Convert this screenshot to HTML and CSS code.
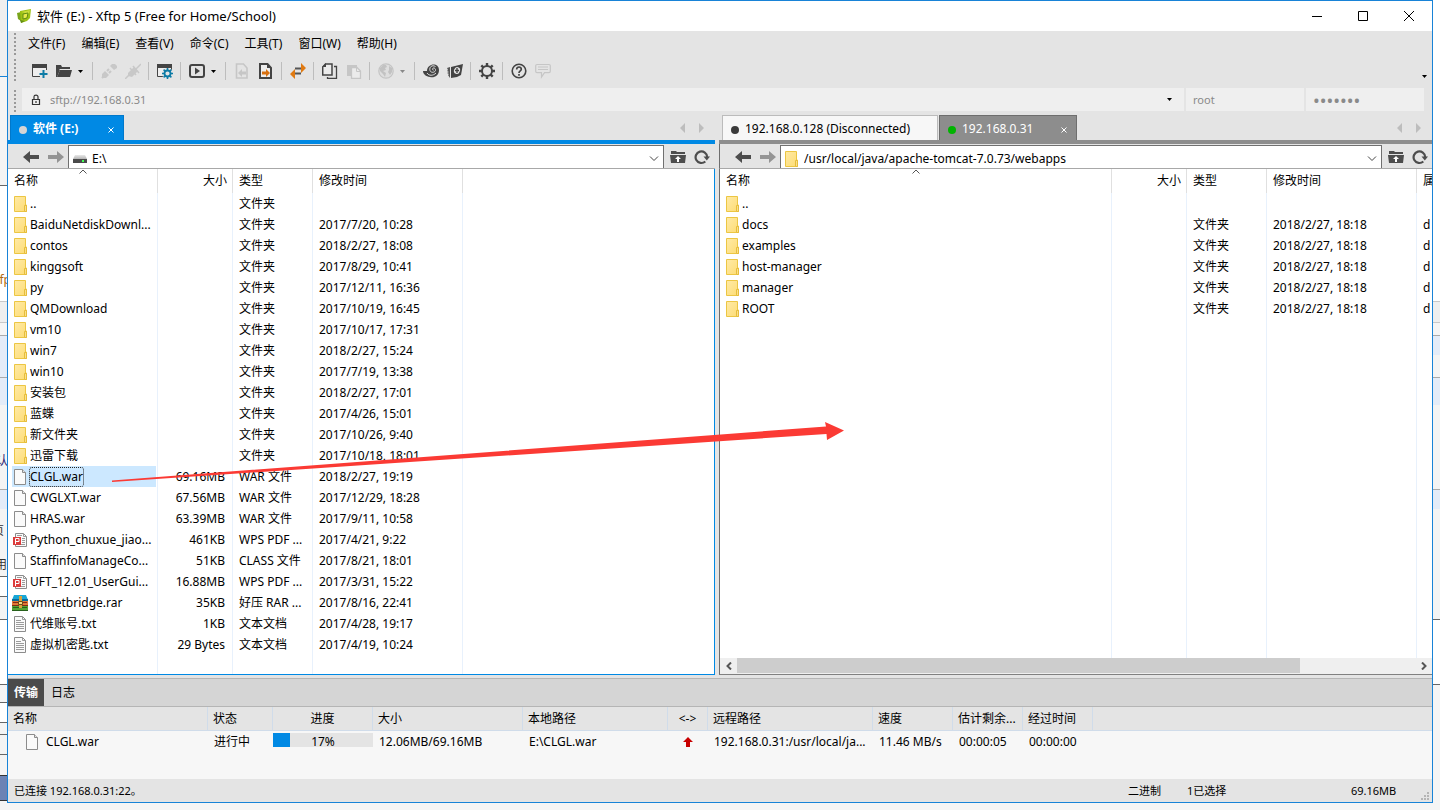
FILE: index.html
```html
<!DOCTYPE html>
<html lang="zh-CN">
<head>
<meta charset="utf-8">
<title>软件 (E:) - Xftp 5 (Free for Home/School)</title>
<link rel="stylesheet" href="styles.css">
</head>
<body>
<svg class="sprite" aria-hidden="true">
  <defs>
    <linearGradient id="fold" x1="0" y1="0" x2="1" y2="1"><stop offset="0" stop-color="#ffeaa6"/><stop offset="1" stop-color="#fddc74"/></linearGradient>
    <linearGradient id="drv" x1="0" y1="0" x2="0" y2="1"><stop offset="0" stop-color="#e8e8e8"/><stop offset="1" stop-color="#b4b4b4"/></linearGradient>
  </defs>
  <symbol id="folder" viewBox="0 0 16 16"><path d="M.5.5h11v8.500h1v6.500h-12z" fill="url(#fold)" stroke="#ecc643"/><path d="M10.500 9.500h2v6h-2z" fill="#fbe08a" stroke="#e6bd3c"/></symbol>
  <symbol id="file" viewBox="0 0 16 16"><path d="M.5.5h8l3 3v12H.5z" fill="#fafafa" stroke="#8c8c8c"/><path d="M8.500.5v3h3" fill="#e4e4e4" stroke="#8c8c8c"/></symbol>
  <symbol id="txt" viewBox="0 0 16 16"><path d="M.5.5h8l3 3v12H.5z" fill="#fafafa" stroke="#8c8c8c"/><path d="M8.500.5v3h3M2 4.500h5M2 6.500h8M2 8.500h8M2 10.500h8M2 12.500h8" fill="none" stroke="#9b9b9b"/></symbol>
  <symbol id="pdf" viewBox="0 0 16 16"><path d="M3.500 1.500h8l3 3v10h-11z" fill="#fafafa" stroke="#8c8c8c"/><path d="M11.500 1.500v3h3M5 3.500h5M10 6.500h3M10 8.500h3M10 10.500h3M5 12.500h8" fill="none" stroke="#9b9b9b"/><rect x="1" y="5" width="8" height="8" fill="#dc3c3c"/><path d="M3.500 12V6.500H7v3H3.500" fill="none" stroke="#fff"/></symbol>
  <symbol id="rar" viewBox="0 0 16 16"><path d="M2 0h12l2 5v1H0V5z" fill="#17a6d6"/><path d="M0 4h16v2H0z" fill="#0b6d9d"/><path d="M0 6h16v4H0z" fill="#e07936"/><path d="M1 7.500h14" stroke="#862a15"/><path d="M0 10h16v1H0z" fill="#862a15"/><path d="M0 11h16v4H0z" fill="#55a433"/><path d="M1 12.500h14M0 15.500h16" stroke="#27611c"/><path d="M7 1h3v12H7z" fill="#d8a33c"/><path d="M6.500 6.500h4v3h-4z" fill="#f6dc83" stroke="#6d4c17"/></symbol>
  <symbol id="drive" viewBox="0 0 14 10"><path d="M2 1h10l2 4H0z" fill="url(#drv)"/><path d="M0 5h14v4H0z" fill="#4a4a4a"/><path d="M9 6h2v2H9z" fill="#4f5"/></symbol>
  <symbol id="back" viewBox="0 0 16 14"><path d="M0 7l7-6v4h9v4H7v4z" fill="currentColor"/></symbol>
  <symbol id="forward" viewBox="0 0 16 14"><path d="M16 7L9 1v4H0v4h9v4z" fill="currentColor"/></symbol>
  <symbol id="up" viewBox="0 0 16 14"><path d="M1 1h5l1 1h8v2H1z" fill="#4d4d4d"/><path d="M0 5h16l-1 8H1z" fill="#4d4d4d"/><path d="M8 6l3 3H9v3H7V9H5z" fill="#fff"/></symbol>
  <symbol id="reload" viewBox="0 0 16 16"><path d="M13.200 8a5.800 5.800 0 1 0-1.900 4.500" fill="none" stroke="#4d4d4d" stroke-width="2.200"/><path d="M9.500 7.500H16l-3.200 4z" fill="#4d4d4d"/></symbol>
  <symbol id="chev" viewBox="0 0 10 6"><path d="M1 .5l4 4 4-4" fill="none" stroke="#444"/></symbol>
  <symbol id="sort" viewBox="0 0 8 5"><path d="M.5 4.500L4 1l3.500 3.500" fill="none" stroke="#555"/></symbol>
  <symbol id="caret" viewBox="0 0 5 3"><path d="M0 0h5L2.500 3z" fill="currentColor"/></symbol>
  <symbol id="tabnav" viewBox="0 0 24 10"><path d="M5 0v10L0 5zM19 0v10l5-5z" fill="#bdbdbd"/></symbol>
  <symbol id="cross" viewBox="0 0 6 6"><path d="M.5.5l5 5m0-5l-5 5" stroke="currentColor"/></symbol>
</svg>

<div class="desktop">
  <div class="strip strip-left"><span class="frag frag-a">tfp</span><span class="frag frag-b">认</span><span class="frag frag-c">页</span><span class="frag frag-d">用</span></div>

  <main class="window">
    <header class="titlebar">
      <svg class="logo" viewBox="0 0 16 16"><path d="M1 5l4-1v9l-3-2z" fill="#79a51b"/><path d="M4 3l11-2-1 9-3 3-6 2z" fill="#9cc114"/><path d="M5 4l9-2-1 4z" fill="#c9dc3c"/><path d="M7 6l5-1-1 5-4 1z" fill="#e9ea4c" stroke="#5f8d14"/><path d="M4 12l5 1-4 2z" fill="#628d17"/></svg>
      <h1>软件 (E:) - Xftp 5 (Free for Home/School)</h1>
      <div class="winbtns">
        <button aria-label="最小化"><svg viewBox="0 0 10 10"><path d="M0 5.500h10" stroke="#000"/></svg></button>
        <button aria-label="最大化"><svg viewBox="0 0 10 10"><path d="M.5.5h9v9h-9z" fill="none" stroke="#000"/></svg></button>
        <button aria-label="关闭"><svg viewBox="0 0 10 10"><path d="M0 0l10 10M10 0L0 10" stroke="#000"/></svg></button>
      </div>
    </header>

    <nav class="menubar">
      <button>文件(F)</button><button>编辑(E)</button><button>查看(V)</button><button>命令(C)</button><button>工具(T)</button><button>窗口(W)</button><button>帮助(H)</button>
    </nav>

    <div class="toolbar">
      <button aria-label="新建"><svg viewBox="0 0 16 16"><path d="M.5 2.500h14v11H.5z" fill="#eee" stroke="#444"/><path d="M0 1h15v4H0z" fill="#444"/><path d="M8 7h8v8H8z" fill="#e4e4e4"/><path d="M11.500 7v8M7.500 11h8" stroke="#0c7ba6" stroke-width="2"/></svg></button>
      <button class="drop" aria-label="打开"><svg viewBox="0 0 16 16"><path d="M0 2h5l1 2h8v3H4L1 14H0z" fill="#444"/><path d="M4 7h12l-2 7H1z" fill="#444"/><path d="M3.500 6.500h12" stroke="#e4e4e4"/></svg><svg class="car"><use href="#caret"/></svg></button>
      <i class="sep"></i>
      <button aria-label="连接"><svg viewBox="0 0 16 16"><g fill="#c8c8c8"><path d="M1 11l3-3 4 4-3 3H1zM9 3l2-2h3l2 2v2l-3 2z"/></g><path d="M1 15l2-2M6 8l2-2M8 10l2-2" stroke="#c8c8c8" stroke-width="2"/></svg></button>
      <button aria-label="断开"><svg viewBox="0 0 16 16"><g fill="#c8c8c8"><path d="M3 10l6-6 4 4-6 6-4-1z"/></g><path d="M0 16l4-4M11 6l5-5M5 5l6 7M8 3l6 7" stroke="#c8c8c8" stroke-width="1.500"/></svg></button>
      <i class="sep"></i>
      <button aria-label="会话属性"><svg viewBox="0 0 16 16"><path d="M.5 2.500h14v11H.5z" fill="#eee" stroke="#444"/><path d="M0 1h15v4H0z" fill="#444"/><circle cx="10.500" cy="10.500" r="5.500" fill="#e4e4e4"/><circle cx="10.500" cy="10.500" r="3" fill="none" stroke="#0c7ba6" stroke-width="1.800"/><path d="M10.500 5v2m0 7v2M5 10.500h2m7 0h2M6.600 6.600L8 8m5 5l1.400 1.400m0-7.800L13 8m-5 5l-1.400 1.400" stroke="#0c7ba6" stroke-width="1.600"/></svg></button>
      <i class="sep"></i>
      <button class="drop" aria-label="运行"><svg viewBox="0 0 16 16"><rect x="1" y="2" width="14" height="12" rx="2" fill="none" stroke="#444" stroke-width="2"/><path d="M6 4.500L11 8l-5 3.500z" fill="#444"/></svg><svg class="car"><use href="#caret"/></svg></button>
      <i class="sep"></i>
      <button aria-label="下载"><svg viewBox="0 0 16 16"><path d="M2.500 1h7l3.500 4v10H2.500z" fill="none" stroke="#c6c6c6" stroke-width="1.600"/><path d="M4 10l4-4v2.500h4v3H8V14z" fill="#c6c6c6"/></svg></button>
      <button aria-label="上传"><svg viewBox="0 0 16 16"><path d="M2 1h7.500L13 5v10H2z" fill="#eee" stroke="#444" stroke-width="2"/><path d="M9 1v4h4" fill="#444"/><path d="M12 10L8 6v2.500H4v3h4V14z" fill="#d8700f"/></svg></button>
      <i class="sep"></i>
      <button aria-label="同步"><svg viewBox="0 0 16 16"><path d="M5 5.500h7M4 10.500h7" stroke="#555" stroke-width="2"/><path d="M11 0l5 5-5 5zM5 6l-5 5 5 5z" fill="#e07a12"/></svg></button>
      <i class="sep"></i>
      <button aria-label="复制"><svg viewBox="0 0 16 16"><path d="M3.500 1H10v11H.7V4z" fill="#ececec" stroke="#444" stroke-width="1.500"/><path d="M0 4l4-4v4z" fill="#444"/><path d="M12 3.500h2.500v11.800H5.500V14" fill="none" stroke="#444" stroke-width="1.300"/></svg></button>
      <button aria-label="粘贴"><svg viewBox="0 0 16 16"><path d="M1 2h10v3H5v8H1z" fill="#c6c6c6"/><path d="M5.500 4.500H11l3.500 3.500v7.500h-9z" fill="#ebebeb" stroke="#c6c6c6" stroke-width="1.300"/><path d="M10.500 5v3.500h4" fill="none" stroke="#c6c6c6"/></svg></button>
      <i class="sep"></i>
      <button class="drop off" aria-label="编码"><svg viewBox="0 0 16 16"><circle cx="8" cy="8" r="7.200" fill="#dedede" stroke="#c4c4c4" stroke-width="1.200"/><path d="M2 5l3-3 3 0 1 2-2 1 1 2-3 1 3 2-1 4-2-3-3-3zM11 3l3 2v4l-2 3-2-3 1-2z" fill="#c2c2c2"/></svg><svg class="car"><use href="#caret"/></svg></button>
      <i class="sep"></i>
      <button aria-label="Xshell"><svg viewBox="0 0 16 16"><path d="M0 8h4c0-8 12-9 12-1 0 6-5 8-9 7C3 13.500 0 11 0 8z" fill="#444"/><path d="M12.500 3.500C9 1.500 6 4 7 7.500c1 3 6 2 5.500-1-.5-2-3-2-3-.3 0 .8.700 1 1.200.8M4 10c2 3 6 3 9 0" fill="none" stroke="#ddd"/></svg></button>
      <button aria-label="Xftp"><svg viewBox="0 0 16 16"><path d="M4 4l12-3-2 11-4 2-6 1z" fill="#444"/><path d="M0 5l3-1v11l-2-3 1-1-2-1 2-1-2-1 1-1z" fill="#555"/><ellipse cx="10" cy="7.500" rx="3" ry="3.500" fill="#e4e4e4" transform="rotate(20 10 7.500)"/><path d="M10 5v5M8 7.500h4" stroke="#444" stroke-width="1.400"/></svg></button>
      <i class="sep"></i>
      <button aria-label="选项"><svg viewBox="0 0 16 16"><circle cx="8" cy="8" r="5" fill="none" stroke="#444" stroke-width="2"/><path d="M8 0v3m0 10v3M0 8h3m10 0h3M2.300 2.300l2 2m7.400 7.400l2 2m0-11.400l-2 2m-7.400 7.400l-2 2" stroke="#444" stroke-width="2.400"/></svg></button>
      <i class="sep"></i>
      <button aria-label="帮助"><svg viewBox="0 0 16 16"><circle cx="8" cy="8" r="6.800" fill="none" stroke="#444" stroke-width="1.600"/><path d="M5.700 6.500C5.500 3.200 10.500 3.200 10.300 6.300 10.200 8 8 7.800 8 10M8 11v1.700" fill="none" stroke="#444" stroke-width="1.700"/></svg></button>
      <button aria-label="反馈"><svg viewBox="0 0 16 16"><path d="M2 1.500h12q1.300 0 1.300 1.300v5.500q0 1.300-1.300 1.300H9.500L6.500 14V9.600H2Q.7 9.600.7 8.300V2.800Q.7 1.500 2 1.500zM3 4h10M3 6.500h10" fill="none" stroke="#c6c6c6" stroke-width="1.200"/></svg></button>
      <svg class="car more"><use href="#caret"/></svg>
    </div>

    <form class="address">
      <label class="host"><svg viewBox="0 0 10 12"><path d="M1.500 5.500h7v5h-7z" fill="none" stroke="#333" stroke-width="1.200"/><path d="M3 5V2.800Q3 1.200 5 1.200t2 1.600V5M5 7v2" fill="none" stroke="#333" stroke-width="1.200"/></svg><input aria-label="主机" value="sftp://192.168.0.31"><svg class="car"><use href="#caret"/></svg></label>
      <input class="cred" aria-label="用户名" value="root">
      <input class="cred secret" type="password" aria-label="密码" value="1234567">
    </form>

    <div class="panes">
      <section class="pane local">
        <div class="tabs">
          <button class="tab active"><i class="dot"></i><span>软件 (E:)</span><svg class="x"><use href="#cross"/></svg></button>
          <svg class="tabnav"><use href="#tabnav"/></svg>
        </div>
        <div class="pathbar">
          <button class="arr" aria-label="后退"><svg><use href="#back"/></svg></button>
          <button class="arr dim" aria-label="前进"><svg><use href="#forward"/></svg></button>
          <label class="combo"><svg class="drive"><use href="#drive"/></svg><input aria-label="本地路径" value="E:\"><svg class="chev"><use href="#chev"/></svg></label>
          <button class="tool" aria-label="上级目录"><svg class="up"><use href="#up"/></svg></button>
          <button class="tool" aria-label="刷新"><svg><use href="#reload"/></svg></button>
        </div>
        <div class="list">
          <table class="files">
            <colgroup><col class="w150"><col class="w75"><col class="w80"><col class="w150"><col></colgroup>
            <thead><tr><th>名称<svg class="sort"><use href="#sort"/></svg></th><th class="num">大小</th><th>类型</th><th>修改时间</th><th></th></tr></thead>
            <tbody>
              <tr><td><div class="n"><svg><use href="#folder"/></svg><span>..</span></div></td><td></td><td>文件夹</td><td></td><td></td></tr>
              <tr><td><div class="n"><svg><use href="#folder"/></svg><span>BaiduNetdiskDownl...</span></div></td><td></td><td>文件夹</td><td>2017/7/20, 10:28</td><td></td></tr>
              <tr><td><div class="n"><svg><use href="#folder"/></svg><span>contos</span></div></td><td></td><td>文件夹</td><td>2018/2/27, 18:08</td><td></td></tr>
              <tr><td><div class="n"><svg><use href="#folder"/></svg><span>kinggsoft</span></div></td><td></td><td>文件夹</td><td>2017/8/29, 10:41</td><td></td></tr>
              <tr><td><div class="n"><svg><use href="#folder"/></svg><span>py</span></div></td><td></td><td>文件夹</td><td>2017/12/11, 16:36</td><td></td></tr>
              <tr><td><div class="n"><svg><use href="#folder"/></svg><span>QMDownload</span></div></td><td></td><td>文件夹</td><td>2017/10/19, 16:45</td><td></td></tr>
              <tr><td><div class="n"><svg><use href="#folder"/></svg><span>vm10</span></div></td><td></td><td>文件夹</td><td>2017/10/17, 17:31</td><td></td></tr>
              <tr><td><div class="n"><svg><use href="#folder"/></svg><span>win7</span></div></td><td></td><td>文件夹</td><td>2018/2/27, 15:24</td><td></td></tr>
              <tr><td><div class="n"><svg><use href="#folder"/></svg><span>win10</span></div></td><td></td><td>文件夹</td><td>2017/7/19, 13:38</td><td></td></tr>
              <tr><td><div class="n"><svg><use href="#folder"/></svg><span>安装包</span></div></td><td></td><td>文件夹</td><td>2018/2/27, 17:01</td><td></td></tr>
              <tr><td><div class="n"><svg><use href="#folder"/></svg><span>蓝蝶</span></div></td><td></td><td>文件夹</td><td>2017/4/26, 15:01</td><td></td></tr>
              <tr><td><div class="n"><svg><use href="#folder"/></svg><span>新文件夹</span></div></td><td></td><td>文件夹</td><td>2017/10/26, 9:40</td><td></td></tr>
              <tr><td><div class="n"><svg><use href="#folder"/></svg><span>迅雷下载</span></div></td><td></td><td>文件夹</td><td>2017/10/18, 18:01</td><td></td></tr>
              <tr class="sel"><td><div class="n"><svg><use href="#file"/></svg><span>CLGL.war</span></div></td><td class="num">69.16MB</td><td>WAR 文件</td><td>2018/2/27, 19:19</td><td></td></tr>
              <tr><td><div class="n"><svg><use href="#file"/></svg><span>CWGLXT.war</span></div></td><td class="num">67.56MB</td><td>WAR 文件</td><td>2017/12/29, 18:28</td><td></td></tr>
              <tr><td><div class="n"><svg><use href="#file"/></svg><span>HRAS.war</span></div></td><td class="num">63.39MB</td><td>WAR 文件</td><td>2017/9/11, 10:58</td><td></td></tr>
              <tr><td><div class="n wide"><svg><use href="#pdf"/></svg><span>Python_chuxue_jiao...</span></div></td><td class="num">461KB</td><td>WPS PDF ...</td><td>2017/4/21, 9:22</td><td></td></tr>
              <tr><td><div class="n"><svg><use href="#file"/></svg><span>StaffinfoManageCo...</span></div></td><td class="num">51KB</td><td>CLASS 文件</td><td>2017/8/21, 18:01</td><td></td></tr>
              <tr><td><div class="n wide"><svg><use href="#pdf"/></svg><span>UFT_12.01_UserGui...</span></div></td><td class="num">16.88MB</td><td>WPS PDF ...</td><td>2017/3/31, 15:22</td><td></td></tr>
              <tr><td><div class="n wide"><svg><use href="#rar"/></svg><span>vmnetbridge.rar</span></div></td><td class="num">35KB</td><td>好压 RAR ...</td><td>2017/8/16, 22:41</td><td></td></tr>
              <tr><td><div class="n"><svg><use href="#txt"/></svg><span>代维账号.txt</span></div></td><td class="num">1KB</td><td>文本文档</td><td>2017/4/28, 19:17</td><td></td></tr>
              <tr><td><div class="n"><svg><use href="#txt"/></svg><span>虚拟机密匙.txt</span></div></td><td class="num">29 Bytes</td><td>文本文档</td><td>2017/4/19, 10:24</td><td></td></tr>
              <tr class="fill"><td></td><td></td><td></td><td></td><td></td></tr>
            </tbody>
          </table>
        </div>
      </section>

      <section class="pane remote">
        <div class="tabs">
          <button class="tab"><i class="dot"></i><span>192.168.0.128 (Disconnected)</span></button>
          <button class="tab active"><i class="dot"></i><span>192.168.0.31</span><svg class="x"><use href="#cross"/></svg></button>
          <svg class="tabnav"><use href="#tabnav"/></svg>
        </div>
        <div class="pathbar">
          <button class="arr" aria-label="后退"><svg><use href="#back"/></svg></button>
          <button class="arr dim" aria-label="前进"><svg><use href="#forward"/></svg></button>
          <label class="combo"><svg class="fold"><use href="#folder"/></svg><input aria-label="远程路径" value="/usr/local/java/apache-tomcat-7.0.73/webapps"><svg class="chev"><use href="#chev"/></svg></label>
          <button class="tool" aria-label="上级目录"><svg class="up"><use href="#up"/></svg></button>
          <button class="tool" aria-label="刷新"><svg><use href="#reload"/></svg></button>
        </div>
        <div class="list">
          <table class="files">
            <colgroup><col><col class="w75"><col class="w80"><col class="w150"><col class="w15"></colgroup>
            <thead><tr><th>名称<svg class="sort"><use href="#sort"/></svg></th><th class="num">大小</th><th>类型</th><th>修改时间</th><th>属</th></tr></thead>
            <tbody>
              <tr><td><div class="n"><svg><use href="#folder"/></svg><span>..</span></div></td><td></td><td></td><td></td><td></td></tr>
              <tr><td><div class="n"><svg><use href="#folder"/></svg><span>docs</span></div></td><td></td><td>文件夹</td><td>2018/2/27, 18:18</td><td>d</td></tr>
              <tr><td><div class="n"><svg><use href="#folder"/></svg><span>examples</span></div></td><td></td><td>文件夹</td><td>2018/2/27, 18:18</td><td>d</td></tr>
              <tr><td><div class="n"><svg><use href="#folder"/></svg><span>host-manager</span></div></td><td></td><td>文件夹</td><td>2018/2/27, 18:18</td><td>d</td></tr>
              <tr><td><div class="n"><svg><use href="#folder"/></svg><span>manager</span></div></td><td></td><td>文件夹</td><td>2018/2/27, 18:18</td><td>d</td></tr>
              <tr><td><div class="n"><svg><use href="#folder"/></svg><span>ROOT</span></div></td><td></td><td>文件夹</td><td>2018/2/27, 18:18</td><td>d</td></tr>
              <tr class="fill"><td></td><td></td><td></td><td></td><td></td></tr>
            </tbody>
          </table>
        </div>
        <div class="hscroll">
          <button aria-label="向左"><svg viewBox="0 0 6 8"><path d="M5 .5L1.500 4 5 7.500" fill="none" stroke="#555" stroke-width="2"/></svg></button>
          <div class="track"><div class="thumb"></div></div>
          <button aria-label="向右"><svg viewBox="0 0 6 8"><path d="M1 .5L4.500 4 1 7.500" fill="none" stroke="#555" stroke-width="2"/></svg></button>
        </div>
      </section>
    </div>

    <section class="transfer">
      <div class="ttabs"><button class="on">传输</button><button>日志</button></div>
      <table class="queue">
        <colgroup><col class="w200"><col class="w65"><col class="w100"><col class="w150"><col class="w145"><col class="w40"><col class="w165"><col class="w80"><col class="w70"><col class="w70"><col></colgroup>
        <thead><tr><th>名称</th><th>状态</th><th class="mid">进度</th><th>大小</th><th>本地路径</th><th class="mid">&lt;-&gt;</th><th>远程路径</th><th>速度</th><th>估计剩余...</th><th>经过时间</th><th></th></tr></thead>
        <tbody><tr><td><div class="n"><svg><use href="#file"/></svg><span>CLGL.war</span></div></td><td>进行中</td><td class="barcell"><div class="bar"><div class="done" style="width:17%"></div><span>17%</span></div></td><td>12.06MB/69.16MB</td><td>E:\CLGL.war</td><td class="mid"><svg class="upl" viewBox="0 0 10 10"><path d="M5 0l5 5H7v5H3V5H0z" fill="#c80000"/></svg></td><td>192.168.0.31:/usr/local/ja...</td><td>11.46 MB/s</td><td>00:00:05</td><td>00:00:00</td><td></td></tr></tbody>
      </table>
    </section>

    <footer class="status">
      <span class="grow">已连接 192.168.0.31:22。</span><span class="s1">二进制</span><span class="s2">1已选择</span><span class="s3">69.16MB</span>
      <svg class="grip" viewBox="0 0 8 8"><path d="M6 0h2v2H6zM3 3h2v2H3zM6 3h2v2H6zM0 6h2v2H0zM3 6h2v2H3zM6 6h2v2H6z" fill="#b4b4b4"/></svg>
    </footer>
  </main>

  <div class="strip strip-right"></div>
  <svg class="pointer" viewBox="0 0 734 62"><path d="M0 60.500L714 6.500 713 2l19 8.500L715 20l-.5-6L0 62z" fill="#fb3a34"/></svg>
</div>
</body>
</html>
```
FILE: styles.css
```css
* { box-sizing: border-box; }
body { margin: 0; background: #f5f5f5; color: #000; font: 12px/18px "Noto Sans", "Noto Sans CJK SC", sans-serif; }
button, input { font: inherit; color: inherit; border: 0; padding: 0; margin: 0; background: none; }
input { min-width: 0; outline: 0; }
svg { display: block; flex: none; }
.sprite { position: absolute; width: 0; height: 0; }

.desktop { position: relative; display: grid; grid-template-columns: 7px minmax(0, 1fr) 7px; min-height: 100vh; }
.strip { position: relative; overflow: hidden; }
.strip-left { background: linear-gradient(#efefef 76px, #1883d7 76px 77px, #f4f4f4 77px 185px, #666 185px 186px, #fff 186px 301px, #c8c8c8 301px 302px, #efefef 302px 322px, #c8c8c8 322px 323px, #f5f5f5 323px 335px, #aaa 335px 336px, #e4ecf8 336px 377px, #aaa 377px 378px, #e4ecf8 378px 405px, #f4f4f4 405px 489px, #aaa 489px 490px, #e4ecf8 490px 509px, #f4f4f4 509px 576px, #666 576px 577px, #fff 577px 596px, #666 596px 597px, #f4f4f4 597px 619px, #666 619px 620px, #fff 620px 684px, #666 684px 685px, #f4f4f4 685px 702px, #666 702px 703px, #fff 703px 722px, #666 722px 723px, #f4f4f4 723px 734px, #666 734px 735px, #f4f4f4 735px 754px, #666 754px 755px, #f4f4f4 755px 775px, #333 775px 776px, #6c83b5 776px 800px, #333 800px 801px, #f5f5f5 801px); }
.strip-right { background: linear-gradient(#fff 301px, #c8c8c8 301px 302px, #efefef 302px 322px, #c8c8c8 322px 323px, #f5f5f5 323px 335px, #aaa 335px 336px, #e4ecf8 336px 355px, #f4f4f4 355px 377px, #aaa 377px 378px, #e4ecf8 378px 405px, #f4f4f4 405px 489px, #aaa 489px 490px, #e4ecf8 490px 509px, #f4f4f4 509px 619px, #666 619px 620px, #fff 620px 684px, #666 684px 685px, #f5f5f5 685px); }
.frag { position: absolute; right: 0; color: #333; }
.frag-a { top: 271px; right: -4px; color: #b06a10; }
.frag-b { top: 452px; right: -1px; color: #2c2470; }
.frag-c { top: 522px; right: 3px; }
.frag-d { top: 556px; }

.window { display: flex; flex-direction: column; margin-bottom: 7px; border: 1px solid #1883d7; background: #e4e4e4; }
.titlebar { display: flex; align-items: center; height: 30px; padding-left: 8px; background: #fff; font-size: 13px; }
.logo { width: 16px; height: 16px; }
.titlebar h1 { margin: 0 0 0 5px; font: inherit; flex: 1; }
.winbtns { display: flex; }
.winbtns button { width: 46px; height: 28px; display: flex; align-items: center; justify-content: center; }
.winbtns svg { width: 10px; height: 10px; }

.menubar, .toolbar, .address { background: repeating-linear-gradient(#999 0 2px, transparent 2px 4px) 6px 2px / 2px 22px no-repeat; }
.menubar { display: flex; gap: 16px; height: 26px; padding-left: 20px; }
.toolbar { display: flex; align-items: center; gap: 8px; height: 31px; padding: 0 5px 3px 24px; }
.toolbar button { flex: none; }
.toolbar button svg { width: 16px; height: 16px; }
.toolbar .drop { display: flex; align-items: center; gap: 5px; }
.toolbar .off { color: #888; }
svg.car { width: 5px; height: 3px; }
.toolbar button svg.car { width: 7px; height: 3px; }
.sep { flex: none; width: 1px; height: 18px; background: #bdbdbd; margin-left: -1px; }
.drop + .sep { margin-left: 0; }
.toolbar .more { margin-left: auto; align-self: flex-end; margin-bottom: 7px; }
.address { display: flex; gap: 2px; height: 27px; padding: 0 8px 4px 14px; color: #8a8a8a; font-size: 11px; }
.address > * { background-color: #efefef; }
.host { flex: 1; display: flex; align-items: center; padding: 0 12px 0 9px; }
.host svg:first-child { width: 10px; height: 12px; margin-right: 9px; }
.host input { flex: 1; }
.host .car { color: #000; }
.address .cred { width: 118px; padding-left: 7px; }
.address .secret { font-size: 18px; }

.panes { flex: 1; display: grid; grid-template-columns: minmax(0, 707fr) minmax(0, 713fr); gap: 4px; }
.pane { display: flex; flex-direction: column; --c: #0089e4; --edge: #0078cb; --line: #0089e4; }
.remote { --c: #8d8d8d; --edge: #6e6e6e; --line: #808080; }
.tabs { display: flex; height: 29px; padding: 0 11px 0 2px; border-bottom: 4px solid var(--c); }
.remote .tabs { padding-left: 3px; gap: 1px; }
.tab { display: flex; align-items: center; height: 25px; padding: 0 9px 0 8px; background: #f7f7f7; border: 1px solid #bbb; border-bottom: 0; }
.tab span { padding: 2px 15px 0 6px; }
.remote .tab:not(.active) { width: 216px; }
.remote .tab.active { width: 138px; }
.tab.active { background: var(--c); border-color: var(--edge); color: #fff; }
.local .tab { width: 114px; font-weight: bold; }
.dot { width: 8px; height: 8px; border-radius: 4px; background: #3a3a3a; flex: none; margin-top: 3px; }
.local .dot { background: #d5d5d5; }
.remote .active .dot { background: #00b400; }
.x { width: 6px; height: 6px; margin: 3px 0 0 auto; }
.tabnav { width: 24px; height: 10px; margin: 8px 0 0 auto; }
.pathbar { display: flex; align-items: center; height: 25px; padding: 1px 5px 0 15px; border-bottom: 1px solid #a8a8a8; }
.remote .pathbar { padding: 1px 4px 0 15px; border-left: 1px solid var(--edge); }
.arr { color: #4d4d4d; margin-right: 9px; }
.arr svg { width: 16px; height: 14px; }
.arr.dim { color: #949494; margin-right: 4px; }
.combo { flex: 1; min-width: 0; align-self: stretch; display: flex; align-items: center; padding: 3px 4px 0 4px; background: #fff; border: 1px solid #707070; border-bottom: 0; }
.combo input { flex: 1; }
.drive { width: 14px; height: 10px; margin-right: 5px; }
.fold { width: 16px; height: 16px; margin-right: 3px; }
.chev { width: 10px; height: 6px; }
.tool { margin-left: 6px; }
.tool + .tool { margin-left: 8px; }
.tool svg { width: 16px; height: 16px; }
.tool svg.up { height: 14px; }

.list { flex: 1; display: grid; background: #fff; border-right: 1px solid var(--line); border-bottom: 1px solid var(--line); }
.remote .list { border-right: 0; border-bottom: 0; border-left: 1px solid var(--edge); }
table { border-collapse: separate; border-spacing: 0; table-layout: fixed; width: 100%; }
th, td { padding: 0 0 0 6px; text-align: left; font-weight: normal; white-space: nowrap; overflow: hidden; }
.files { height: 100%; }
.files th { position: relative; height: 24px; border-right: 1px solid #e0e0e0; }
.files td { height: 21px; border-right: 1px solid #e8f1fc; }
.files .fill td { height: auto; }
.files th:last-child, .files td:last-child { border-right: 0; }
.files th.num { padding-right: 5px; }
.files td.num { padding-right: 7px; }
.num { text-align: right; }
.sort { position: absolute; top: 0; left: calc(50% - 4px); width: 8px; height: 5px; }
.n { display: flex; align-items: center; height: 21px; }
.n svg { width: 16px; height: 16px; }
.files td:first-child { padding-left: 4px; padding-right: 1px; }
.files .n { padding-left: 2px; }
.files .wide { padding-left: 0; gap: 2px; }
.sel .n { background: #cce8ff; }
.sel .n span { outline: 1px dotted #222; border-radius: 2px; }
.hscroll { display: flex; height: 17px; background: #efefef; border-left: 1px solid var(--edge); border-bottom: 1px solid var(--line); }
.hscroll button { width: 17px; display: flex; align-items: center; justify-content: center; }
.hscroll svg { width: 6px; height: 8px; }
.track { flex: 1; }
.thumb { width: 83%; height: 15px; background: #cdcdcd; }

.w15 { width: 15px; } .w40 { width: 40px; } .w65 { width: 65px; } .w70 { width: 70px; } .w75 { width: 75px; } .w80 { width: 80px; }
.w100 { width: 100px; } .w145 { width: 145px; } .w150 { width: 150px; } .w165 { width: 165px; } .w200 { width: 200px; }

.transfer { margin-top: 3px; min-height: 101px; background: #f7f7f7; border-top: 1px solid #b5b5b5; }
.ttabs { display: flex; height: 28px; background: #d5d5d5; border-bottom: 1px solid #b5b5b5; }
.ttabs button { width: 38px; }
.ttabs .on { width: 36px; background: #4b4b4b; color: #fff; font-weight: bold; }
.queue th { height: 24px; padding-left: 5px; background: #e4e4e4; border-right: 1px solid #d0dcea; border-bottom: 1px solid #d0dcea; }
.queue th:last-child { border-right: 0; }
.queue td:first-child { padding-left: 18px; }
.queue .n svg { margin-right: 4px; }
.queue .mid { text-align: center; padding-left: 0; }
.upl { width: 10px; height: 10px; margin: 0 auto; }
.queue .barcell { padding: 0; }
.bar { position: relative; height: 14px; margin-bottom: 3px; background: #e4e4e4; line-height: 17px; text-align: center; }
.done { position: absolute; top: 0; left: 0; height: 14px; background: #0089e4; }
.status { display: flex; align-items: center; height: 23px; padding: 0 3px 0 6px; font-size: 11px; }
.grow { flex: 1; }
.s1 { width: 59px; } .s2 { width: 164px; } .s3 { width: 70px; }
.grip { width: 8px; height: 8px; align-self: flex-end; margin-bottom: 2px; }
.pointer { position: absolute; left: 112px; top: 420px; width: 734px; height: 62px; pointer-events: none; }
```
